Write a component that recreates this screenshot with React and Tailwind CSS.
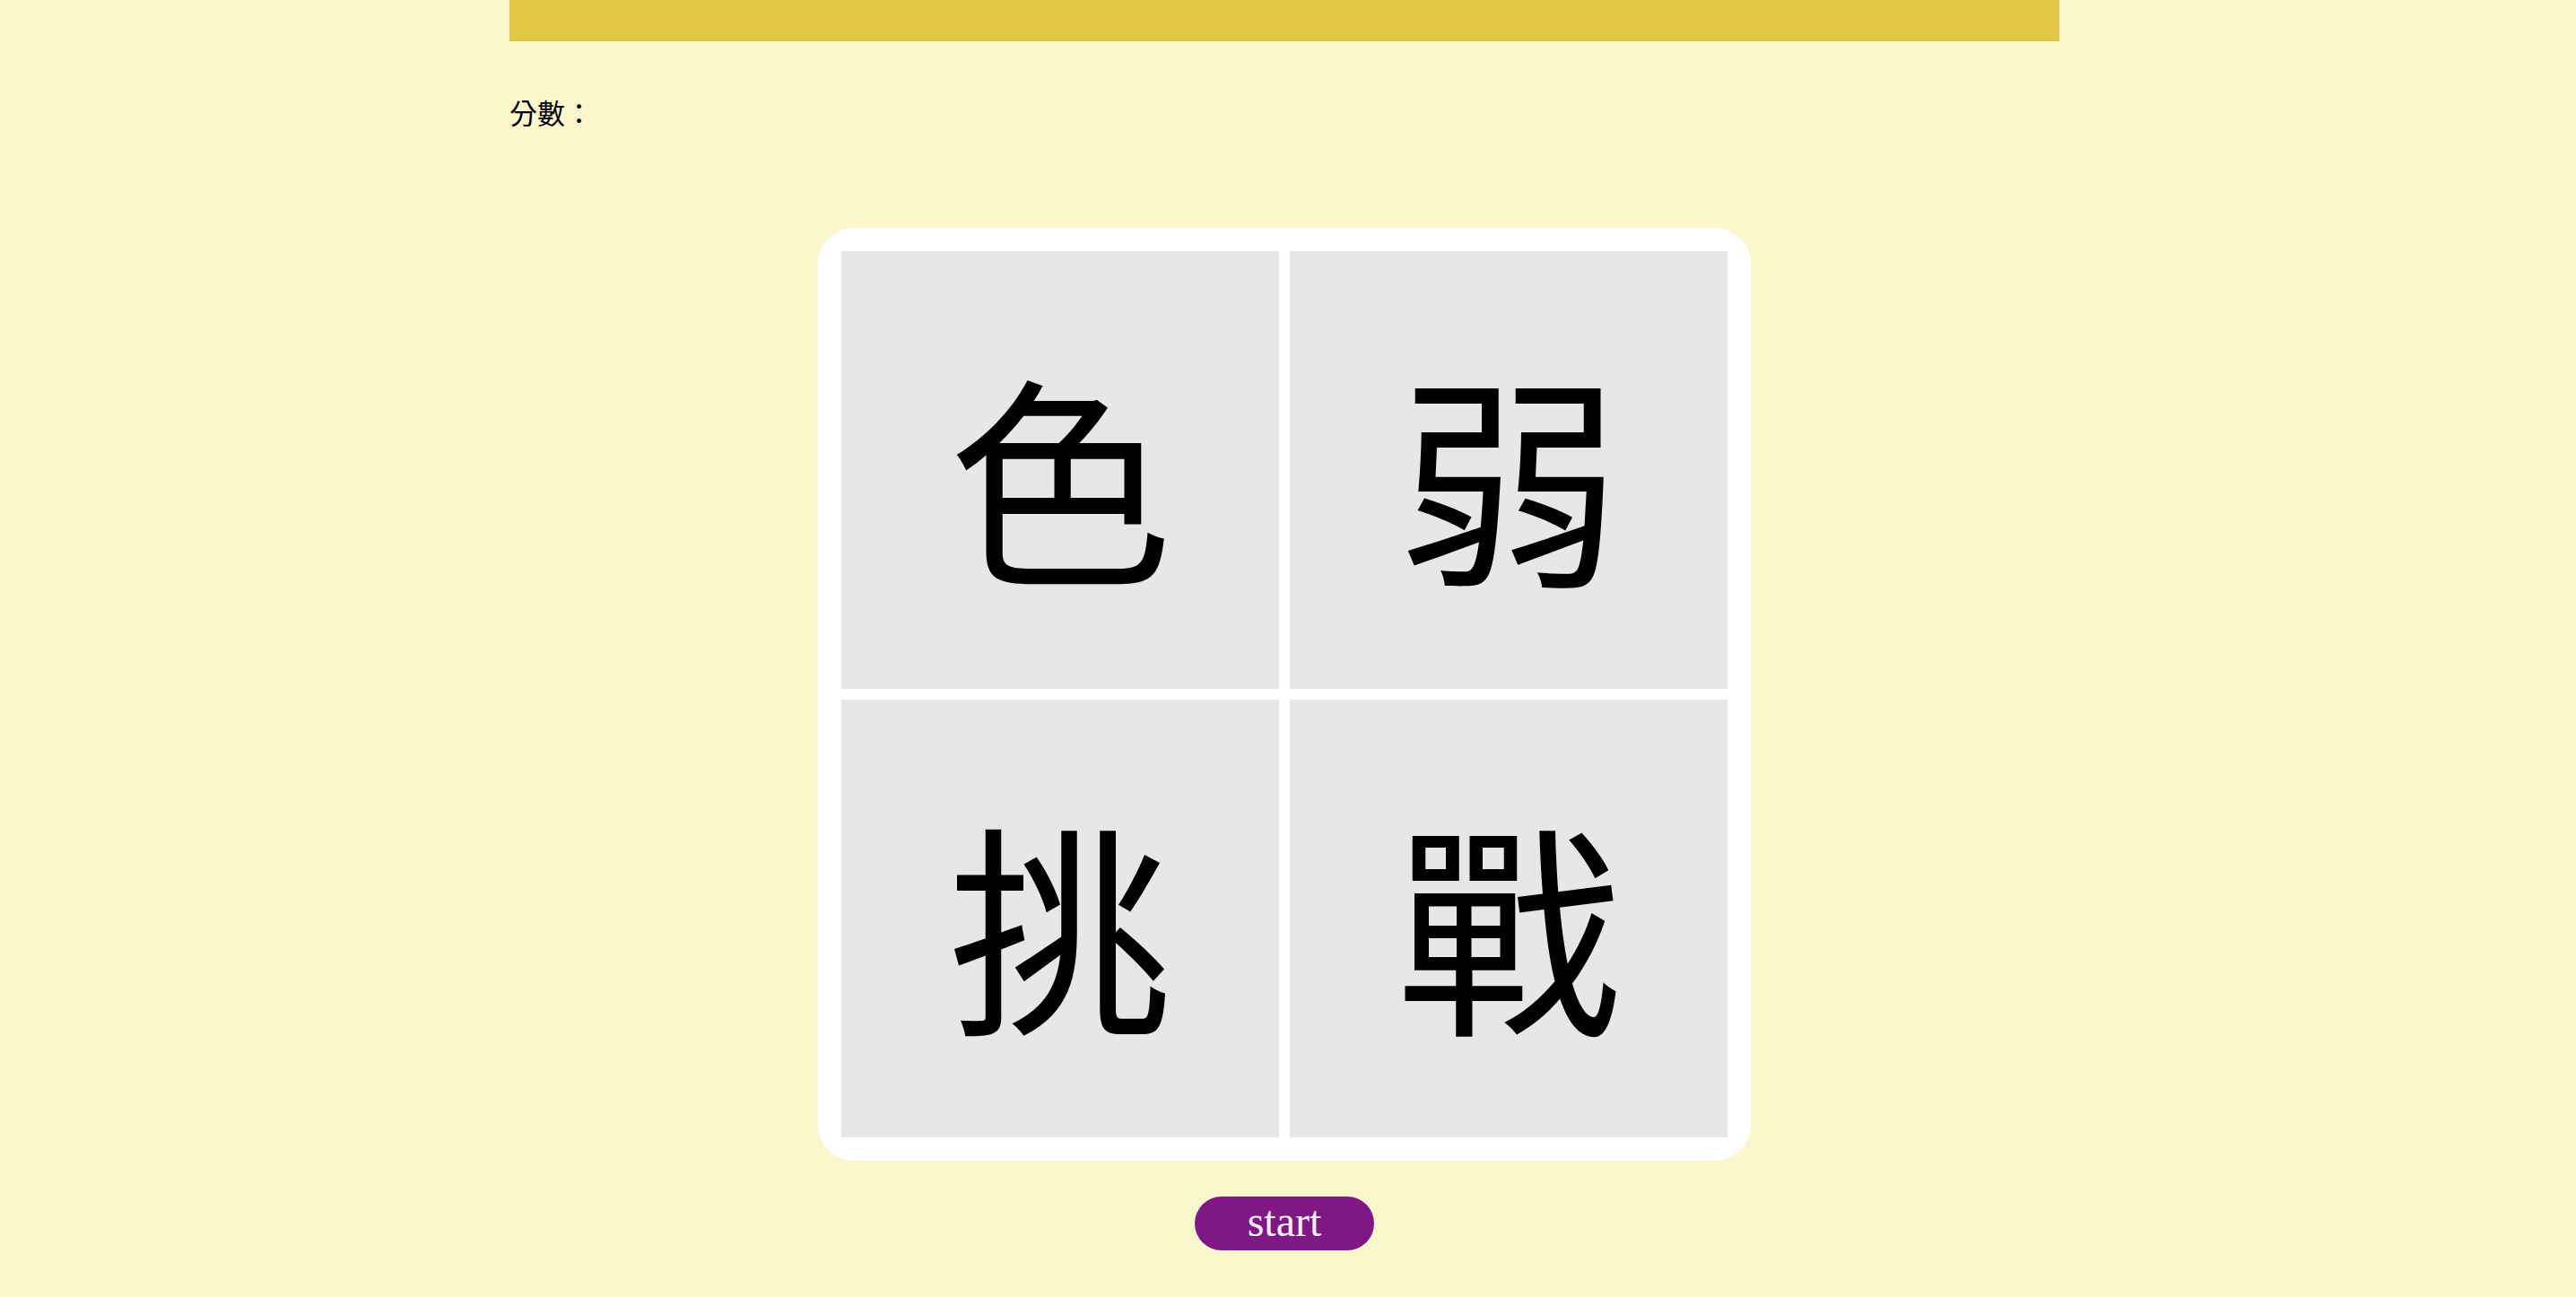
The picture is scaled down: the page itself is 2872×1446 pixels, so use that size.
import React, { useState } from 'react';

const chars = ['色', '弱', '挑', '戰'];

export default function App() {
  const [score, setScore] = useState('');
  const [running, setRunning] = useState(false);

  return (
    <div className="min-h-[1446px] w-full bg-[#fbf6cc]">
      <div className="ml-[568px] w-[1728px]">
        {/* top bar */}
        <div className="h-[46px] bg-[#e3c644]" />

        <p
          className="mt-[62px] text-[31px] leading-[40px] text-black"
          style={{ fontFamily: '"Liberation Serif", "Noto Sans CJK TC", serif' }}
        >
          分數：{score}
        </p>

        {/* board */}
        <div className="mx-auto mt-[106px] grid h-[1040px] w-[1040px] grid-cols-2 grid-rows-2 gap-[12px] rounded-[40px] bg-white p-[26px]">
          {chars.map((c) => (
            <div
              key={c}
              className="flex items-center justify-center bg-[#e7e7e7] pt-[4px] text-[250px] leading-none text-black"
              style={{ fontFamily: '"Noto Sans CJK TC", serif' }}
            >
              {c}
            </div>
          ))}
        </div>

        <div className="mt-[40px] flex justify-center">
          <button
            onClick={() => {
              setRunning(!running);
              setScore(running ? '' : '0');
            }}
            className="flex h-[60px] w-[200px] items-center justify-center rounded-full bg-[#7f1785] pb-[4px] text-[48px] leading-none text-[#f3eef5]"
            style={{ fontFamily: '"Liberation Serif", serif' }}
          >
            start
          </button>
        </div>
      </div>
    </div>
  );
}
